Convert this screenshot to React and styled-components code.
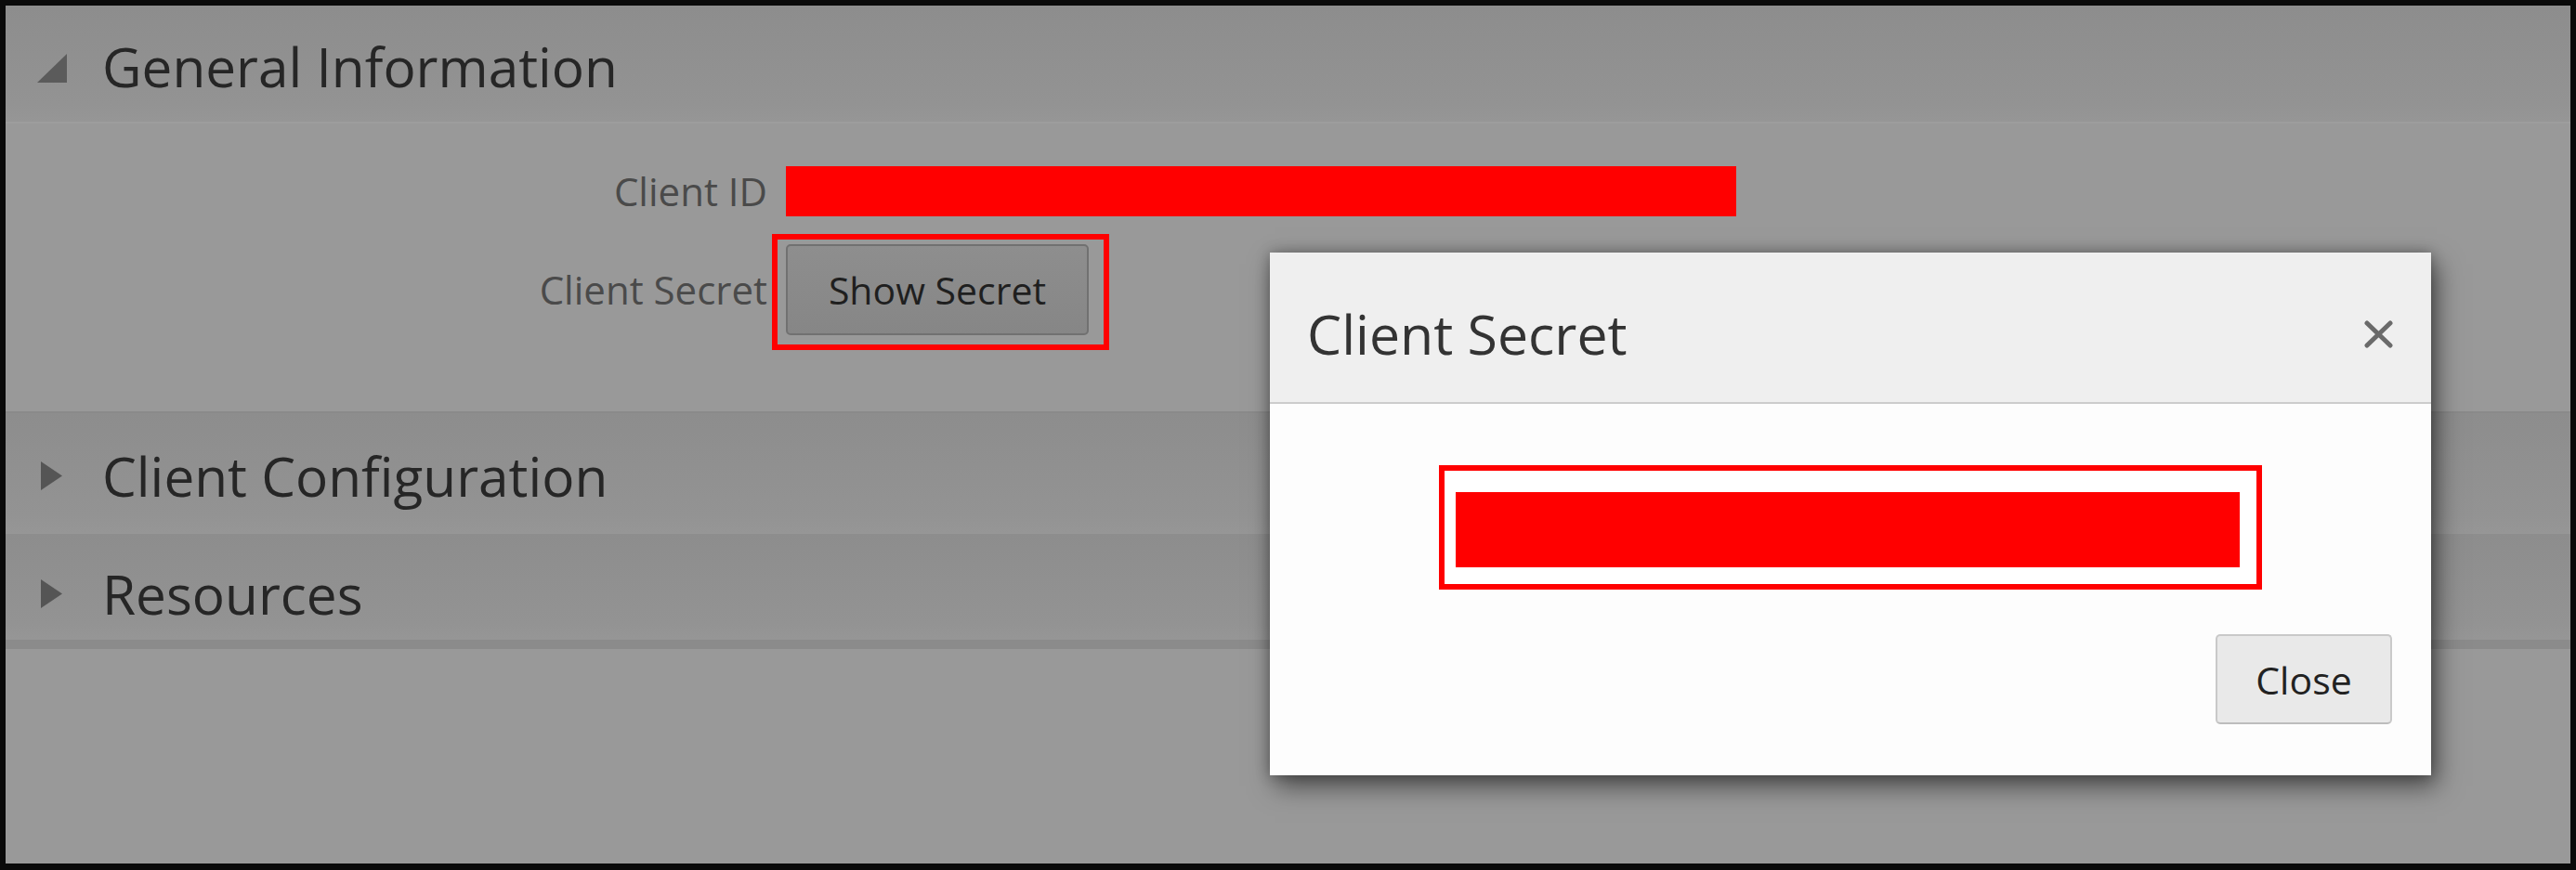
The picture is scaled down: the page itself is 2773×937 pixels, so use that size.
import styled, { createGlobalStyle } from 'styled-components';

const GlobalStyle = createGlobalStyle`
    body {
        margin: 0;
        background: #000000;
        font-family: "Open Sans", "Noto Sans", sans-serif;
    }
`

function ExpandedArrow() {
    return (
        <svg width="34" height="33" viewBox="0 0 34 33">
            <polygon points="34,0 34,33 0,33" fill="#5b5b5b" />
        </svg>
    );
}

function CollapsedArrow() {
    return (
        <svg width="23" height="31" viewBox="0 0 23 31">
            <polygon points="0,0 23,15.5 0,31" fill="#555555" />
        </svg>
    );
}

function CloseIcon() {
    return (
        <svg width="31" height="30" viewBox="0 0 31 30">
            <line x1="3" y1="3" x2="28" y2="27" stroke="#6a6a6a" strokeWidth="5" strokeLinecap="round" />
            <line x1="28" y1="3" x2="3" y2="27" stroke="#6a6a6a" strokeWidth="5" strokeLinecap="round" />
        </svg>
    );
}

function SectionHeader({ title, expanded, height, last }) {
    return (
        <HeaderBand height={height} expanded={expanded} last={last}>
            <ArrowBox expanded={expanded}>
                {expanded ? <ExpandedArrow /> : <CollapsedArrow />}
            </ArrowBox>
            <HeaderTitle>{title}</HeaderTitle>
        </HeaderBand>
    );
}

function SecretDialog() {
    return (
        <Dialog>
            <DialogHeader>
                <DialogTitle>Client Secret</DialogTitle>
                <CloseIcon />
            </DialogHeader>
            <DialogBody>
                <SecretOutline>
                    <Redacted width={844} height={81} />
                </SecretOutline>
                <DialogFooter>
                    <CloseButton>Close</CloseButton>
                </DialogFooter>
            </DialogBody>
        </Dialog>
    );
}

export default function App() {
    return (
        <>
            <GlobalStyle />
            <Frame>
                <SectionHeader title="General Information" expanded height={127} />
                <FormBody>
                    <Label>Client ID</Label>
                    <Field>
                        <Redacted width={1023} height={54} />
                    </Field>
                    <Label>Client Secret</Label>
                    <Field>
                        <Highlight>
                            <GrayButton>Show Secret</GrayButton>
                        </Highlight>
                    </Field>
                </FormBody>
                <Divider />
                <SectionHeader title="Client Configuration" height={130} />
                <SectionHeader title="Resources" height={124} last />
                <SecretDialog />
            </Frame>
        </>
    );
}

const bandBorder = props => {
    if (props.expanded) {
        return "2px solid #9d9d9d";
    } else if (props.last) {
        return "10px solid #8b8b8b";
    }
    return "1px solid #979797";
};

const Frame = styled.div`
    position: relative;
    box-sizing: border-box;
    width: 2773px;
    height: 937px;
    border: 6px solid #0a0a0a;
    border-bottom-width: 7px;
    background: #999999;
    overflow: hidden;
`

const HeaderBand = styled.div`
    height: ${props => props.height}px;
    box-sizing: border-box;
    display: flex;
    align-items: center;
    gap: 38px;
    padding-left: 32px;
    padding-top: ${props => props.last ? 14 : 6}px;
    background: linear-gradient(#8d8d8d, #939393 85%, #969696);
    border-bottom: ${props => bandBorder(props)};
`

const ArrowBox = styled.div`
    width: 34px;
    box-sizing: border-box;
    display: flex;
    justify-content: center;
    align-items: center;
    padding-left: ${props => props.expanded ? 2 : 0}px;
    padding-top: ${props => props.expanded ? 4 : 0}px;
`

const HeaderTitle = styled.span`
    font-size: 58.5px;
    color: #262626;
    line-height: 1;
`

const FormBody = styled.div`
    display: grid;
    grid-template-columns: 820px auto;
    column-gap: 20px;
    row-gap: 30px;
    align-items: center;
    padding: 46px 0 82px;
`

const Label = styled.span`
    text-align: right;
    font-size: 42px;
    color: #4a4a4a;
    line-height: 1;
`

const Field = styled.div`
    display: flex;
    align-items: center;
`

const Redacted = styled.div`
    width: ${props => props.width}px;
    height: ${props => props.height}px;
    background: #ff0000;
`

const Highlight = styled.div`
    position: relative;

    &::after {
        content: "";
        position: absolute;
        inset: -11px -22px -16px -15px;
        border: 6px solid #ff0000;
        pointer-events: none;
    }
`

const GrayButton = styled.button`
    width: 326px;
    height: 98px;
    box-sizing: border-box;
    border: 2px solid #717171;
    border-radius: 5px;
    background: linear-gradient(#8e8e8e, #868686);
    font-family: "Open Sans", sans-serif;
    font-size: 41px;
    color: #1f1f1f;
    padding: 0;
`

const Divider = styled.div`
    height: 2px;
    background: #8a8a8a;
`

const Dialog = styled.div`
    position: absolute;
    left: 1361px;
    top: 266px;
    width: 1250px;
    height: 563px;
    background: #fdfdfd;
    box-shadow: 6px 12px 26px rgba(0, 0, 0, 0.5), 0 0 14px rgba(0, 0, 0, 0.3);
    display: flex;
    flex-direction: column;
`

const DialogHeader = styled.div`
    height: 163px;
    box-sizing: border-box;
    display: flex;
    align-items: center;
    justify-content: space-between;
    padding: 14px 41px 0 40px;
    background: #efefef;
    border-bottom: 2px solid #cccccc;
`

const DialogTitle = styled.span`
    font-size: 59px;
    color: #333333;
    line-height: 1;
`

const DialogBody = styled.div`
    flex: 1;
    display: flex;
    flex-direction: column;
    align-items: center;
    padding-top: 66px;
`

const SecretOutline = styled.div`
    border: 6px solid #ff0000;
    padding: 23px 18px 18px 12px;
    background: #ffffff;
`

const DialogFooter = styled.div`
    align-self: stretch;
    display: flex;
    justify-content: flex-end;
    padding: 48px 42px 0 0;
`

const CloseButton = styled.button`
    width: 190px;
    height: 97px;
    box-sizing: border-box;
    border: 2px solid #c9c9c9;
    border-bottom-color: #bdbdbd;
    border-radius: 5px;
    background: #e9e9e9;
    font-family: "Open Sans", sans-serif;
    font-size: 41px;
    color: #222222;
    padding: 0;
`
